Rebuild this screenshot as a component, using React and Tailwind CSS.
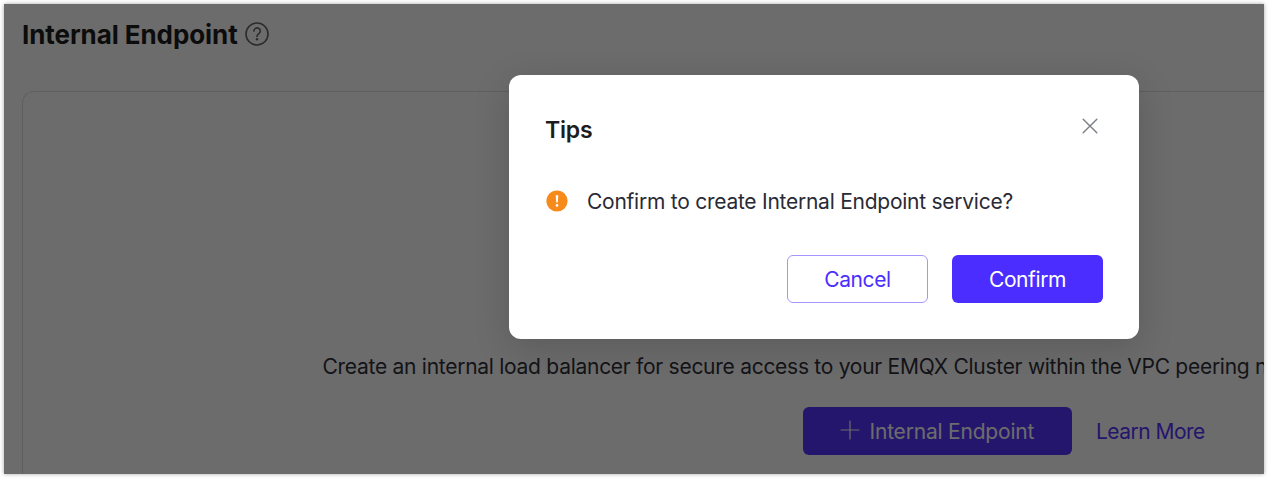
function HelpIcon() {
  return (
    <svg width="24" height="24" viewBox="0 0 24 24" fill="none" stroke="#666666" strokeWidth="1.6" strokeLinecap="round">
      <circle cx="12" cy="12" r="11" />
      <path d="M8.9 9.1a3.2 3.2 0 1 1 5 2.6c-1.2.8-1.9 1.4-1.9 2.7" />
      <circle cx="12" cy="17.3" r="1.2" fill="#666666" stroke="none" />
    </svg>
  );
}

function WarningIcon() {
  return (
    <svg width="22" height="22" viewBox="0 0 22 22">
      <circle cx="11" cy="11" r="10.6" fill="#f68a1b" />
      <path d="M9.7 5.2h2.6l-.5 7.4h-1.6z" fill="#fff" />
      <circle cx="11" cy="15.4" r="1.3" fill="#fff" />
    </svg>
  );
}

function CloseIcon() {
  return (
    <svg width="16" height="16" viewBox="0 0 16 16" stroke="#7b7d85" strokeWidth="1.4" strokeLinecap="round">
      <path d="M1.2 1.2l13.6 13.6M14.8 1.2L1.2 14.8" />
    </svg>
  );
}

function PlusIcon() {
  return (
    <svg width="20" height="20" viewBox="0 0 20 20" stroke="#fff" strokeWidth="1.2" strokeLinecap="round">
      <path d="M10 1v18M1 10h18" />
    </svg>
  );
}

function EndpointPage() {
  return (
    <div className="flex h-full flex-col pl-[18px] pt-[13px]">
      <header className="flex h-9 items-center gap-[7px]">
        <h1 className="w-[216px] whitespace-nowrap text-[26px] font-bold leading-9 tracking-[-0.08px] text-[#1d1d1d]">Internal Endpoint</h1>
        <span className="pb-[2px]"><HelpIcon /></span>
      </header>
      <section className="mt-[38px] flex flex-1 flex-col rounded-tl-[12px] border-l border-t border-[#e0e0e0] pl-[299.5px] pt-[260px]">
        <p className="whitespace-nowrap text-[21px] leading-[30px] tracking-[-0.27px] text-[#30313a]">
          Create an internal load balancer for secure access to your EMQX Cluster within the VPC peering network.
        </p>
        <div className="ml-[480.5px] mt-[25px] flex items-center gap-6">
          <button className="flex h-12 w-[269px] items-center rounded-[6px] bg-[#5534ff] pl-[37px] text-[21px] tracking-[-0.2px] text-white">
            <span className="pb-[2px]"><PlusIcon /></span>
            <span className="ml-[9.5px] whitespace-nowrap pt-px">Internal Endpoint</span>
          </button>
          <a className="whitespace-nowrap pt-px text-[21px] tracking-[-0.52px] text-[#5534ff]">Learn More</a>
        </div>
      </section>
    </div>
  );
}

function TipsDialog() {
  return (
    <div role="dialog" className="flex h-[264px] w-[630px] flex-col rounded-[12px] bg-white px-9 pt-9 shadow-[0_9px_36px_rgba(0,0,0,0.16)]">
      <div className="flex h-9 items-center justify-between">
        <h2 className="pt-[2px] text-[23px] font-semibold leading-9 tracking-[-0.2px] text-[#1d1d1d]">Tips</h2>
        <button className="mb-[6px] mr-[5px]"><CloseIcon /></button>
      </div>
      <div className="mt-[39px] flex h-8 items-center gap-[19px] pl-px">
        <span className="pb-[2px]"><WarningIcon /></span>
        <p className="whitespace-nowrap text-[21px] leading-8 tracking-[-0.25px] text-[#292a35]">Confirm to create Internal Endpoint service?</p>
      </div>
      <div className="mt-[37px] flex justify-end gap-6 text-[21px] tracking-[-0.4px]">
        <button className="h-12 w-[141px] rounded-[6px] border border-[#a596ff] pt-[2px] text-[#4b2eff]">Cancel</button>
        <button className="h-12 w-[151px] rounded-[6px] bg-[#4b2eff] pt-[2px] text-white">Confirm</button>
      </div>
    </div>
  );
}

export default function App() {
  return (
    <div className="h-[478px] w-[1268px] overflow-hidden bg-white p-1 font-[Inter,sans-serif]">
      <main className="relative h-[470px] w-[1260px] shadow-[0_0_4px_rgba(0,0,0,0.35)]">
        <div className="h-full overflow-hidden bg-white">
          <EndpointPage />
        </div>
        <div className="absolute inset-0 flex items-start overflow-hidden bg-[rgba(0,0,0,0.576)] pl-[505px] pt-[71px]">
          <TipsDialog />
        </div>
      </main>
    </div>
  );
}
